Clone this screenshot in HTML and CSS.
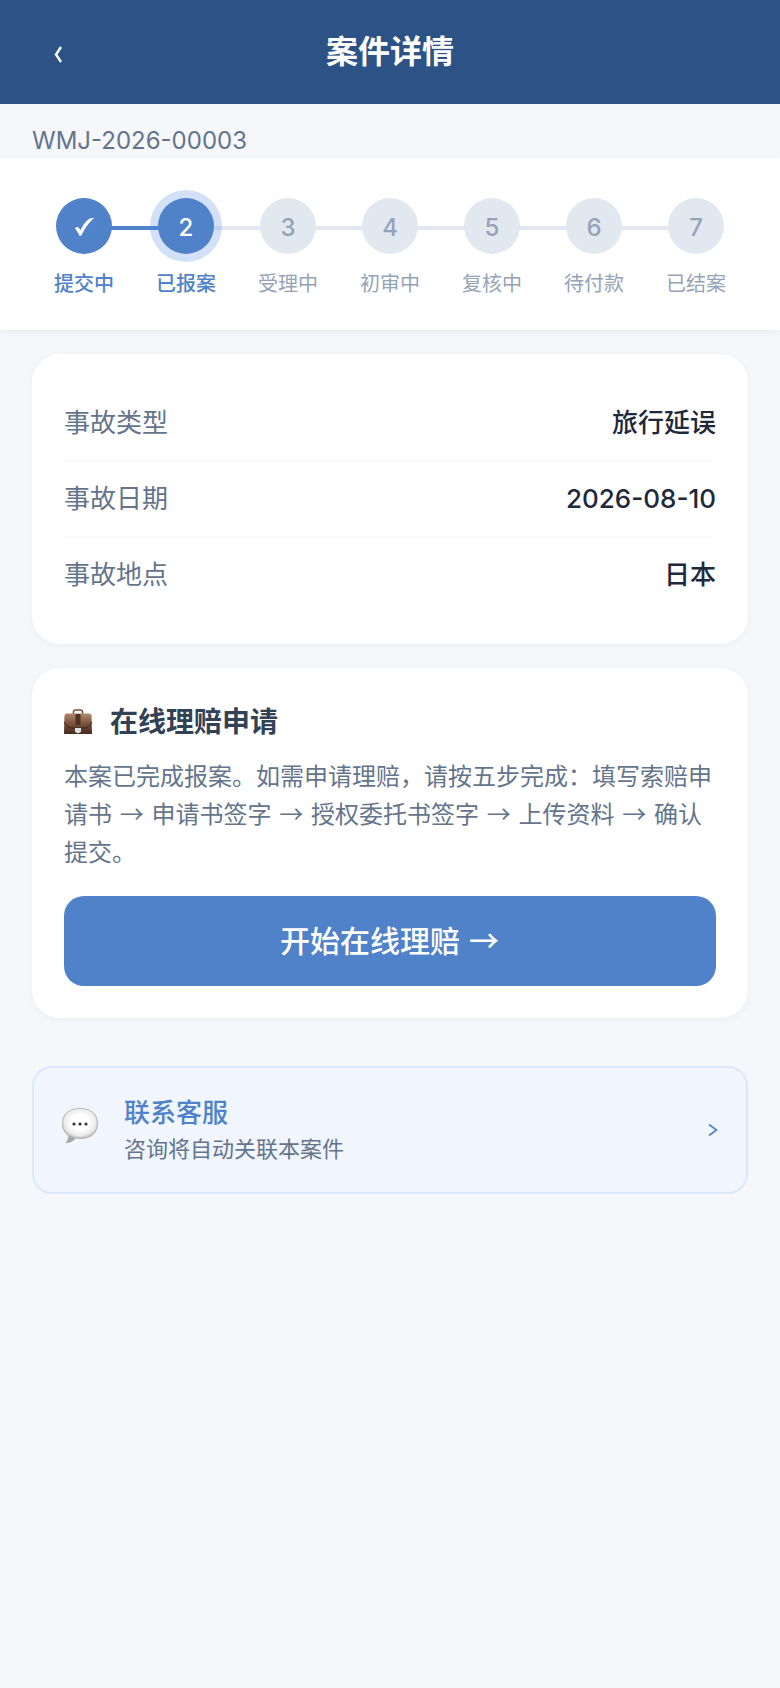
FILE: index.html
```
<!DOCTYPE html>
<html lang="zh-CN">
<head>
  <meta charset="UTF-8">
  <meta name="viewport" content="width=device-width, initial-scale=1.0">
  <title>案件详情</title>
  <link rel="stylesheet" href="styles.css">
</head>
<body>

  <!-- Header -->
  <header class="header">
    <button class="back-btn" type="button" aria-label="返回">
      <svg width="10" height="18" viewBox="0 0 10 18" fill="none" stroke="currentColor" stroke-width="2.400">
        <path d="M8 2 L3 9.500 L8 17"/>
      </svg>
    </button>
    <h1>案件详情</h1>
  </header>

  <p class="case-no">WMJ-2026-00003</p>

  <!-- Progress -->
  <ol class="steps">
    <li class="step done">
      <span class="dot">
        <svg width="20" height="20" viewBox="0 0 20 20" fill="currentColor">
          <path d="M1 11.500 C2.500 9.500 4.200 9.500 5 11 L6.400 13.200 C9 8 12.500 3 16 1.500 C17.500 .9 19 .9 20 1.200 C15 5 10.500 12 7.500 18.300 L5.600 19 C4.200 16 2.700 13.500 1 11.500 Z"/>
        </svg>
      </span>
      <span class="step-name">提交中</span>
    </li>
    <li class="step current">
      <span class="dot">2</span>
      <span class="step-name">已报案</span>
    </li>
    <li class="step">
      <span class="dot">3</span>
      <span class="step-name">受理中</span>
    </li>
    <li class="step">
      <span class="dot">4</span>
      <span class="step-name">初审中</span>
    </li>
    <li class="step">
      <span class="dot">5</span>
      <span class="step-name">复核中</span>
    </li>
    <li class="step">
      <span class="dot">6</span>
      <span class="step-name">待付款</span>
    </li>
    <li class="step">
      <span class="dot">7</span>
      <span class="step-name">已结案</span>
    </li>
  </ol>

  <main class="content">
    <!-- Accident info -->
    <dl class="card info">
      <div class="info-row">
        <dt>事故类型</dt>
        <dd>旅行延误</dd>
      </div>
      <div class="info-row">
        <dt>事故日期</dt>
        <dd>2026-08-10</dd>
      </div>
      <div class="info-row">
        <dt>事故地点</dt>
        <dd>日本</dd>
      </div>
    </dl>

    <!-- Online claim -->
    <section class="card claim">
      <h2>
        <svg width="28" height="28" viewBox="0 0 28 28">
          <defs>
            <linearGradient id="leather" x1="0" y1="0" x2="0" y2="1">
              <stop offset="0" stop-color="#b08a6c"/>
              <stop offset=".45" stop-color="#80573f"/>
              <stop offset="1" stop-color="#46281f"/>
            </linearGradient>
          </defs>
          <path d="M9.500 6 V4 Q9.500 2 11.500 2 H16.500 Q18.500 2 18.500 4 V6" fill="none" stroke="#75503c" stroke-width="1.600"/>
          <path d="M2.500 5.500 H25.500 Q27.500 5.500 27.600 8 L28 26 H0 L.4 8 Q.5 5.500 2.500 5.500 Z" fill="url(#leather)"/>
          <path d="M.5 14 Q2 20 8 20 H20 Q26 20 27.500 14" fill="none" stroke="#3d241c" stroke-width="1"/>
          <rect x="11.500" y="6" width="5" height="11" fill="#503225"/>
          <path d="M11 20 H17 V24 L14 25.500 L11 24 Z" fill="#dedede"/>
        </svg>
        在线理赔申请
      </h2>
      <p>本案已完成报案。如需申请理赔，请按五步完成：填写索赔申请书 <span class="to">→</span> 申请书签字 <span class="to">→</span> 授权委托书签字 <span class="to">→</span> 上传资料 <span class="to">→</span> 确认提交。</p>
      <button class="start-btn" type="button">开始在线理赔 <span class="to">→</span></button>
    </section>

    <!-- Customer service -->
    <a class="contact" href="#">
      <svg class="bubble" width="36" height="36" viewBox="0 0 36 36">
        <defs>
          <radialGradient id="bubble" cx=".5" cy=".45" r=".6">
            <stop offset=".4" stop-color="#ffffff"/>
            <stop offset=".75" stop-color="#ebebeb"/>
            <stop offset="1" stop-color="#a5a5a5"/>
          </radialGradient>
        </defs>
        <path d="M6.500 26 Q6.500 31.500 3.500 35.300 Q11 35 14 29.500 Z" fill="#a8a8a8"/>
        <path d="M18 .5 C29 .5 35.500 6 35.500 15.500 C35.500 25 29 30.500 18 30.500 C7 30.500 .5 25 .5 15.500 C.5 6 7 .5 18 .5 Z" fill="url(#bubble)" stroke="#aaaaaa" stroke-width=".8"/>
        <circle cx="12" cy="16" r="1.600" fill="#333"/>
        <circle cx="18" cy="16" r="1.600" fill="#333"/>
        <circle cx="24" cy="16" r="1.600" fill="#333"/>
      </svg>
      <span class="contact-text">
        <strong>联系客服</strong>
        <small>咨询将自动关联本案件</small>
      </span>
      <svg class="arrow" width="10" height="14" viewBox="0 0 10 14" fill="none" stroke="currentColor" stroke-width="1.600">
        <path d="M1 1.500 L8.500 7 L1 12.500"/>
      </svg>
    </a>
  </main>

</body>
</html>
```
FILE: styles.css
```
* {
  box-sizing: border-box;
  margin: 0;
  padding: 0;
}

body {
  min-height: 100vh;
  background: #f5f7fb;
  color: #1e293b;
  font-family: Inter, "Noto Sans CJK SC", sans-serif;
}

button {
  border: none;
  font-family: inherit;
  cursor: pointer;
}

.header {
  display: grid;
  grid-template-columns: 52px 1fr 52px;
  align-items: center;
  height: 104px;
  padding: 0 32px;
  background: #2d5286;
  color: white;
}

.header h1 {
  font-size: 32px;
  font-weight: 600;
  line-height: 48px;
  text-align: center;
}

.back-btn {
  height: 52px;
  padding-top: 4px;
  background: none;
  color: white;
}

.back-btn svg {
  display: block;
  margin: 0 auto;
}

.case-no {
  padding: 20px 32px 0;
  color: #64748b;
  font-size: 24px;
  line-height: 34px;
}

/* progress steps */
.steps {
  display: flex;
  padding: 40px 33px 32px;
  background: white;
  box-shadow: 0 2px 8px rgba(0, 0, 0, 0.05);
  list-style: none;
}

.step {
  position: relative;
  flex: 1;
  display: flex;
  flex-direction: column;
  align-items: center;
  gap: 16px;
  color: #94a3b8;
}

.step + .step::before {
  content: "";
  position: absolute;
  top: 28px;
  left: -50%;
  width: 100%;
  height: 4px;
  background: #e2e8f0;
}

.dot {
  position: relative;
  z-index: 1;
  display: flex;
  align-items: center;
  justify-content: center;
  width: 56px;
  height: 56px;
  padding-top: 2px;
  border-radius: 50%;
  background: #e2e8f0;
  font-size: 24px;
  font-weight: 500;
}

.step-name {
  font-size: 20px;
  line-height: 28px;
  white-space: nowrap;
}

.done .dot,
.current .dot {
  background: #4f82c9;
  color: white;
}

.done .step-name,
.current .step-name {
  color: #4f82c9;
  font-weight: 500;
}

.step.current::before {
  background: #4f82c9;
}

.current .dot {
  box-shadow: 0 0 0 8px rgba(74, 134, 226, 0.25);
}

.content {
  padding: 24px 32px;
}

.card {
  margin-bottom: 24px;
  padding: 32px;
  border-radius: 28px;
  background: white;
  box-shadow: 0 2px 8px rgba(0, 0, 0, 0.04);
}

.info-row {
  display: flex;
  justify-content: space-between;
  padding: 20px 0;
  font-size: 26px;
  line-height: 34px;
}

.info-row + .info-row {
  border-top: 2px solid #fafafa;
}

.info-row dt {
  color: #64748b;
}

.info-row dd {
  font-weight: 500;
}

.claim h2 {
  display: flex;
  align-items: center;
  gap: 18px;
  margin-bottom: 14px;
  color: #334155;
  font-size: 28px;
  font-weight: 600;
  line-height: 44px;
}

.claim p {
  margin-bottom: 24px;
  color: #64748b;
  font-size: 24px;
  line-height: 38px;
}

.to {
  padding: 0 1px;
  font-family: "Noto Sans CJK SC", sans-serif;
  line-height: 1;
}

.start-btn {
  width: 100%;
  height: 90px;
  padding-bottom: 4px;
  border-radius: 20px;
  background: #4f82c9;
  color: white;
  font-size: 30px;
  font-weight: 500;
}

/* customer service entry */
.contact {
  display: flex;
  align-items: center;
  gap: 26px;
  margin-top: 48px;
  padding: 24px 28px;
  border: 2px solid #dbe7fa;
  border-radius: 20px;
  background: #f1f5fd;
  color: #4f82c9;
  text-decoration: none;
}

.bubble {
  margin-bottom: 8px;
}

.contact-text {
  flex: 1;
  display: flex;
  flex-direction: column;
  padding-bottom: 4px;
}

.contact-text strong {
  font-size: 26px;
  font-weight: 500;
  line-height: 42px;
}

.contact-text small {
  color: #64748b;
  font-size: 22px;
  line-height: 30px;
}
```
